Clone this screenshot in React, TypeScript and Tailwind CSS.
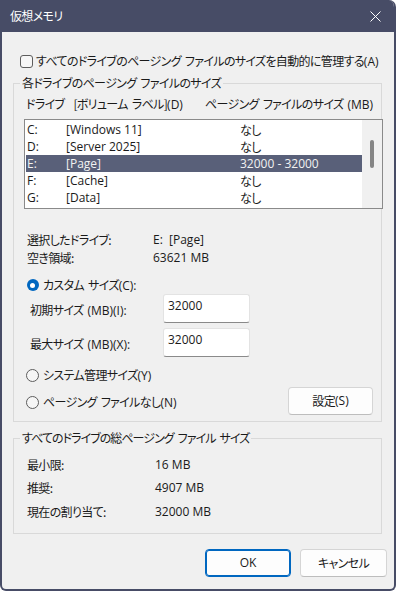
import React from "react";

const L = "font-['Open_Sans',sans-serif] tracking-normal";

function S() {
  return <span className="inline-block w-[4px]" />;
}

const rows = [
  { d: "C:", l: "[Windows 11]", s: "なし" },
  { d: "D:", l: "[Server 2025]", s: "なし" },
  { d: "E:", l: "[Page]", s: "32000 - 32000", sel: true },
  { d: "F:", l: "[Cache]", s: "なし" },
  { d: "G:", l: "[Data]", s: "なし" },
];

function Radio({ checked }: { checked?: boolean }) {
  if (checked) {
    return (
      <span className="flex h-[13px] w-[13px] items-center justify-center">
        <span className="flex h-[12px] w-[12px] items-center justify-center rounded-full bg-[#0067c0]">
          <span className="h-[5px] w-[5px] rounded-full bg-white" />
        </span>
      </span>
    );
  }
  return <span className="h-[13px] w-[13px] rounded-full border border-[#5d5d5d] bg-[#f6f6f6]" />;
}

export default function App() {
  return (
    <div className="h-[591px] w-[396px] bg-white font-['Noto_Sans_CJK_JP',sans-serif] text-[12px] tracking-[-0.65px] text-[#1a1a1a] [font-feature-settings:'palt']">
      <div className="flex h-[591px] w-[396px] flex-col overflow-hidden rounded-tr-[7px] rounded-b-[6px] border-x-2 border-b-2 border-[#474c66] bg-[#f0f0f0]">
        {/* Title bar */}
        <div className="flex h-[32px] shrink-0 items-center justify-between bg-[#474c66] pl-[8px] pr-[12px] text-white">
          <span className="leading-[16px]">仮想メモリ</span>
          <svg width="11" height="11" viewBox="0 0 11 11" className="mr-[1px]">
            <path d="M0.5 0.5 L10.5 10.5 M10.5 0.5 L0.5 10.5" stroke="#ffffff" strokeWidth="1" />
          </svg>
        </div>

        {/* Auto manage checkbox */}
        <div className="mt-[21px] flex h-[16px] items-center gap-[3px] whitespace-nowrap pl-[18px] leading-[16px]">
          <span className="h-[13px] w-[13px] shrink-0 rounded-[3px] border border-[#5d5d5d] bg-[#f6f6f6]" />
          <span>
            すべてのドライブのページング<S />ファイルのサイズを自動的に管理する<span className={L}>(A)</span>
          </span>
        </div>

        {/* Group 1 */}
        <fieldset className="ml-[11px] mt-[6px] w-[369px] border border-[#d9d9d9] pb-[6px]">
          <legend className="ml-[6px] px-[2px] leading-[16px]">
            各ドライブのページング<S />ファイルのサイズ
          </legend>
          <div className="mt-[5px] flex whitespace-nowrap pl-[12px] leading-[16px]">
            <span className="w-[179px]">
              ドライブ<span className="inline-block w-[9px]" />[ボリューム<S />ラベル]<span className={L}>(D)</span>
            </span>
            <span>
              ページング<S />ファイルのサイズ<S /><span className={L}>(MB)</span>
            </span>
          </div>

          {/* List box */}
          <div className="-mr-[2px] ml-[10px] mt-[6px] flex h-[90px] border border-[#8a8a8a] bg-white">
            <div className="flex-1 pl-[1px] pt-[1px]">
              {rows.map((r) => (
                <div
                  key={r.d}
                  className={`flex h-[17px] items-center pl-[1px] leading-[17px] ${r.sel ? "bg-[#596079] text-[#f2f2f2]" : ""}`}
                >
                  <span className={`w-[39px] ${L}`}>{r.d}</span>
                  <span className={`w-[174px] ${L}`}>{r.l}</span>
                  <span className={r.s === "なし" ? "" : L}>{r.s}</span>
                </div>
              ))}
            </div>
            <div className="w-[20px] bg-[#f0f0f0] pl-[8px] pt-[20px]">
              <div className="h-[28px] w-[4px] rounded-[2px] bg-[#858585]" />
            </div>
          </div>

          {/* Selected drive info */}
          <div className="mt-[22px] pl-[13px]">
            <div className="flex h-[18px] items-center">
              <span className="w-[126px]">選択したドライブ:</span>
              <span className={L}>E:&nbsp;&nbsp;[Page]</span>
            </div>
            <div className="flex h-[18px] items-center">
              <span className="w-[126px]">空き領域:</span>
              <span className={L}>63621 MB</span>
            </div>
          </div>

          {/* Custom size radio */}
          <div className="mt-[10px] flex h-[16px] items-center gap-[4px] pl-[12px]">
            <Radio checked />
            <span>
              カスタム<S />サイズ<span className={L}>(C):</span>
            </span>
          </div>

          <div className="mt-[1px] flex h-[29px] items-center pl-[16px]">
            <span className="w-[133px] pt-[3px]">
              初期サイズ<S /><span className={L}>(MB)(I):</span>
            </span>
            <div className={`h-[29px] w-[87px] rounded-[3px] border border-[#e3e3e3] border-b-[#8a8a8a] bg-white pl-[4px] pt-[3px] leading-[16px] ${L}`}>
              32000
            </div>
          </div>

          <div className="mt-[5px] flex h-[29px] items-center pl-[16px]">
            <span className="w-[133px] pt-[3px]">
              最大サイズ<S /><span className={L}>(MB)(X):</span>
            </span>
            <div className={`h-[29px] w-[87px] rounded-[3px] border border-[#e3e3e3] border-b-[#8a8a8a] bg-white pl-[4px] pt-[3px] leading-[16px] ${L}`}>
              32000
            </div>
          </div>

          <div className="mt-[10px] flex h-[16px] items-center gap-[4px] pl-[12px]">
            <Radio />
            <span>
              システム管理サイズ<span className={L}>(Y)</span>
            </span>
          </div>

          <div className="mt-[4px] flex h-[28px] items-center justify-between pl-[12px] pr-[8px]">
            <div className="flex items-center gap-[4px] pt-[2px]">
              <Radio />
              <span>
                ページング<S />ファイルなし<span className={L}>(N)</span>
              </span>
            </div>
            <button className="flex h-[28px] w-[85px] items-center justify-center rounded-[4px] border border-[#d5d5d5] border-b-[#bdbdbd] bg-[#fdfdfd]">
              設定<span className={L}>(S)</span>
            </button>
          </div>
        </fieldset>

        {/* Group 2 */}
        <fieldset className="ml-[11px] mt-[8px] w-[369px] border border-[#d9d9d9] pb-[9px]">
          <legend className="ml-[6px] px-[2px] leading-[16px] tracking-[-0.95px]">
            すべてのドライブの総ページング<S />ファイル<S />サイズ
          </legend>
          <div className="mt-[7px] pl-[13px]">
            <div className="flex h-[23.5px] items-center">
              <span className="w-[128px]">最小限:</span>
              <span className={L}>16 MB</span>
            </div>
            <div className="flex h-[23.5px] items-center">
              <span className="w-[128px]">推奨:</span>
              <span className={L}>4907 MB</span>
            </div>
            <div className="flex h-[23.5px] items-center">
              <span className="w-[128px]">現在の割り当て:</span>
              <span className={L}>32000 MB</span>
            </div>
          </div>
        </fieldset>

        {/* Buttons */}
        <div className="mr-[7px] mt-[15px] flex justify-end gap-[9px]">
          <button className={`flex h-[28px] w-[86px] items-center justify-center rounded-[4px] border border-[#0067c0] bg-[#fdfdfd] shadow-[inset_0_0_0_1px_#0067c0] ${L}`}>
            OK
          </button>
          <button className="flex h-[28px] w-[87px] items-center justify-center rounded-[4px] border border-[#d5d5d5] border-b-[#bdbdbd] bg-[#fdfdfd]">
            キャンセル
          </button>
        </div>
      </div>
    </div>
  );
}
